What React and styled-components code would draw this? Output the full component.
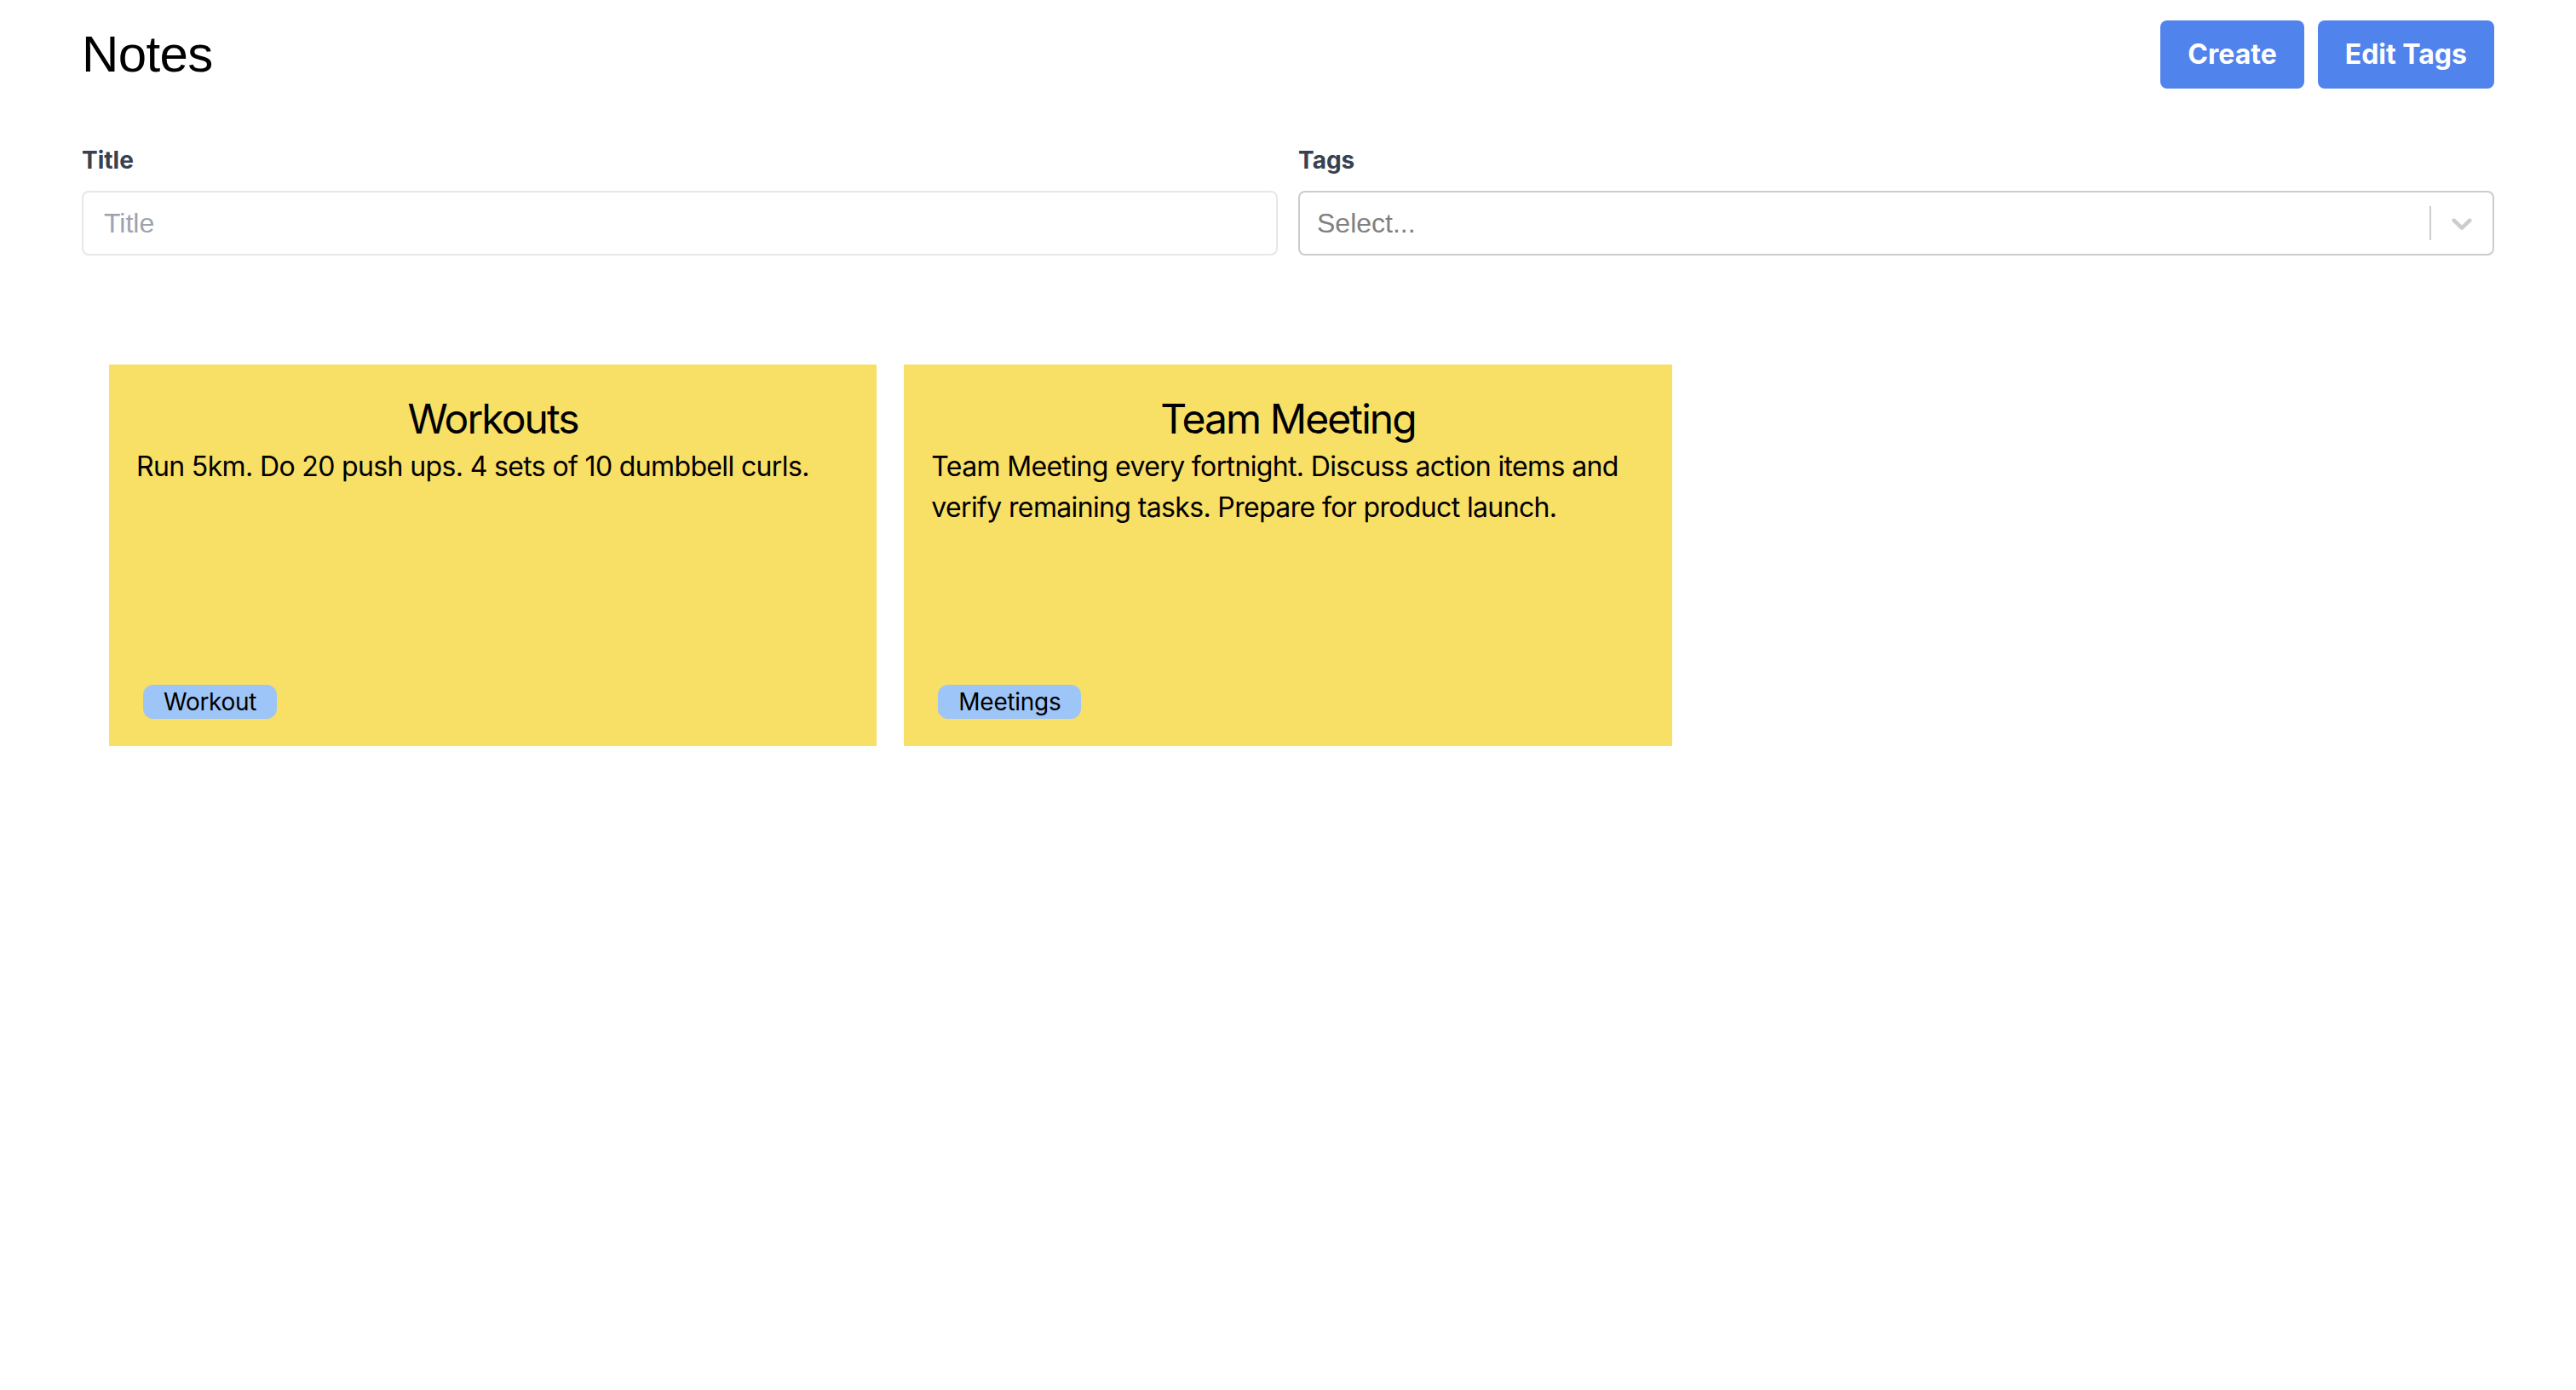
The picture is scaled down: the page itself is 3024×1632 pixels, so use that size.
import React, { useState } from "react";
import styled, { createGlobalStyle } from "styled-components";

const GlobalStyle = createGlobalStyle`
  html, body {
    margin: 0;
    padding: 0;
    background: #ffffff;
  }
  body {
    font-family: Inter, "Noto Sans", sans-serif;
    color: #000;
  }
  * {
    box-sizing: border-box;
  }
`;

const notes = [
  {
    id: 1,
    title: "Workouts",
    body: "Run 5km. Do 20 push ups. 4 sets of 10 dumbbell curls.",
    tags: ["Workout"],
  },
  {
    id: 2,
    title: "Team Meeting",
    body: "Team Meeting every fortnight. Discuss action items and verify remaining tasks. Prepare for product launch.",
    tags: ["Meetings"],
  },
];

const ChevronDown = () => (
  <svg width="40" height="40" viewBox="0 0 20 20" aria-hidden="true" focusable="false">
    <path
      fill="currentColor"
      d="M4.516 7.548c0.436-0.446 1.043-0.481 1.576 0l3.908 3.747 3.908-3.747c0.533-0.481 1.141-0.446 1.574 0 0.436 0.445 0.408 1.197 0 1.615-0.406 0.418-4.695 4.502-4.695 4.502-0.217 0.223-0.502 0.335-0.787 0.335s-0.57-0.112-0.789-0.335c0 0-4.287-4.084-4.695-4.502s-0.436-1.17 0-1.615z"
    />
  </svg>
);

const App = () => {
  const [title, setTitle] = useState("");

  return (
    <Page>
      <GlobalStyle />
      <Header>
        <Heading>Notes</Heading>
        <Actions>
          <Button type="button">Create</Button>
          <Button type="button">Edit Tags</Button>
        </Actions>
      </Header>

      <Filters>
        <Field>
          <Label htmlFor="title">Title</Label>
          <TextInput
            id="title"
            type="text"
            placeholder="Title"
            value={title}
            onChange={(e) => setTitle(e.target.value)}
          />
        </Field>
        <Field>
          <Label>Tags</Label>
          <SelectControl>
            <ValueContainer>
              <Placeholder>Select...</Placeholder>
            </ValueContainer>
            <Separator />
            <Indicator>
              <ChevronDown />
            </Indicator>
          </SelectControl>
        </Field>
      </Filters>

      <CardGrid>
        {notes.map((note) => (
          <Card key={note.id}>
            <CardTitle>{note.title}</CardTitle>
            <CardBody>{note.body}</CardBody>
            <TagRow>
              {note.tags.map((tag) => (
                <Tag key={tag}>{tag}</Tag>
              ))}
            </TagRow>
          </Card>
        ))}
      </CardGrid>
    </Page>
  );
};

const Page = styled.div`
  padding: 24px 96px;
  min-height: 100vh;
`;

const Header = styled.header`
  display: flex;
  justify-content: space-between;
  align-items: center;
  height: 80px;
`;

const Heading = styled.h1`
  margin: 0;
  font-family: "Liberation Sans", Arial, sans-serif;
  font-weight: 400;
  font-size: 60px;
  line-height: 72px;
  letter-spacing: -0.01em;
  color: #000;
`;

const Actions = styled.div`
  display: flex;
  gap: 16px;
`;

const Button = styled.button`
  font-family: Inter, "Noto Sans", sans-serif;
  font-weight: 700;
  font-size: 32px;
  line-height: 48px;
  padding: 16px 32px;
  border: none;
  border-radius: 8px;
  background-color: #5183ec;
  color: #ffffff;
  cursor: pointer;
  &:hover {
    background-color: #3f72dd;
  }
`;

const Filters = styled.div`
  display: grid;
  grid-template-columns: 1fr 1fr;
  column-gap: 24px;
  margin-top: 64px;
`;

const Field = styled.div`
  display: flex;
  flex-direction: column;
`;

const Label = styled.label`
  font-family: Inter, "Noto Sans", sans-serif;
  font-weight: 700;
  font-size: 28px;
  line-height: 40px;
  color: #374151;
  margin-bottom: 16px;
`;

const TextInput = styled.input`
  height: 76px;
  width: 100%;
  border: 2px solid #e5e7eb;
  border-radius: 8px;
  padding: 0 24px;
  font-family: "Liberation Sans", Arial, sans-serif;
  font-size: 32px;
  color: #111827;
  outline: none;
  &::placeholder {
    color: #9ca3af;
  }
`;

const SelectControl = styled.div`
  display: flex;
  align-items: stretch;
  height: 76px;
  border: 2px solid #cccccc;
  border-radius: 8px;
  background: #fff;
`;

const ValueContainer = styled.div`
  flex: 1;
  display: flex;
  align-items: center;
  padding: 4px 16px;
`;

const Placeholder = styled.span`
  margin: 0 4px;
  font-family: "Liberation Sans", Arial, sans-serif;
  font-size: 32px;
  color: #808080;
`;

const Separator = styled.span`
  width: 2px;
  margin: 16px 0;
  background-color: #cccccc;
`;

const Indicator = styled.div`
  display: flex;
  align-items: center;
  padding: 16px;
  color: #cccccc;
`;

const CardGrid = styled.div`
  display: grid;
  grid-template-columns: repeat(3, 1fr);
  gap: 32px;
  padding: 32px;
  margin-top: 96px;
`;

const Card = styled.article`
  display: flex;
  flex-direction: column;
  height: 448px;
  padding: 32px;
  background-color: #f8df65;
`;

const CardTitle = styled.h2`
  margin: 0;
  text-align: center;
  font-family: Inter, "Noto Sans", sans-serif;
  font-weight: 400;
  font-size: 48px;
  line-height: 64px;
  letter-spacing: -0.04em;
`;

const CardBody = styled.p`
  margin: 0;
  font-family: Inter, "Noto Sans", sans-serif;
  font-size: 32px;
  line-height: 48px;
  letter-spacing: -0.02em;
`;

const TagRow = styled.div`
  display: flex;
  gap: 16px;
  margin-top: auto;
  padding: 0 8px;
`;

const Tag = styled.span`
  font-family: Inter, "Noto Sans", sans-serif;
  font-size: 28px;
  line-height: 40px;
  letter-spacing: -0.01em;
  padding: 0 24px;
  border-radius: 12px;
  background-color: #9ec5f7;
  color: #000;
`;

export default App;
